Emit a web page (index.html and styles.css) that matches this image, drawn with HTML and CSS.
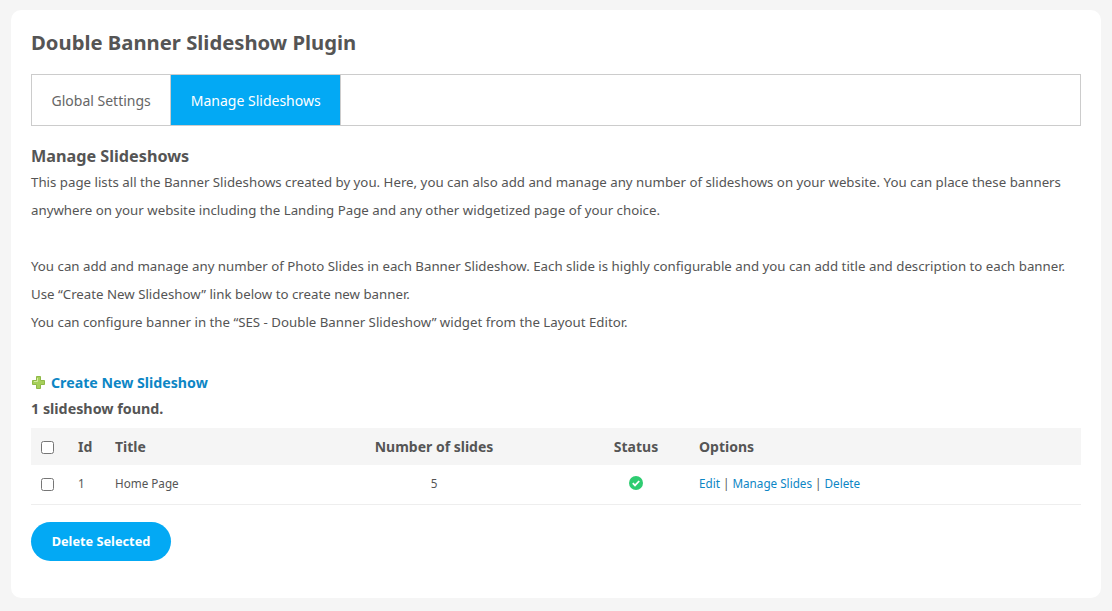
FILE: index.html
```html
<!DOCTYPE html>
<html lang="en">
<head>
<meta charset="utf-8">
<title>Double Banner Slideshow Plugin</title>
<link rel="stylesheet" href="styles.css">
</head>
<body>
<main class="card">
  <h1 class="title">Double Banner Slideshow Plugin</h1>
  <nav class="tabs">
    <a class="tab">Global Settings</a>
    <a class="tab tab-active">Manage Slideshows</a>
  </nav>
  <h2 class="section">Manage Slideshows</h2>
  <p class="desc">This page lists all the Banner Slideshows created by you. Here, you can also add and manage any number of slideshows on your website. You can place these banners<br>anywhere on your website including the Landing Page and any other widgetized page of your choice.<br><br>You can add and manage any number of Photo Slides in each Banner Slideshow. Each slide is highly configurable and you can add title and description to each banner.<br>Use “Create New Slideshow” link below to create new banner.<br>You can configure banner in the “SES - Double Banner Slideshow” widget from the Layout Editor.</p>
  <a class="create">
    <svg class="plus" width="15" height="15" viewBox="0 0 15 15"><path d="M5.500 1.500h4v4h4v4h-4v4h-4v-4h-4v-4h4z" fill="#a6cf5a" stroke="#8fb847" stroke-width="1"/><path d="M6.500 3v3.500H3" fill="none" stroke="#d4ea9f" stroke-width="1"/></svg>
    Create New Slideshow</a>
  <div class="count">1 slideshow found.</div>
  <table class="grid">
    <thead>
      <tr>
        <th class="c-check"><input class="box-head" type="checkbox"></th>
        <th class="c-id">Id</th>
        <th class="c-title">Title</th>
        <th class="c-num">Number of slides</th>
        <th class="c-status">Status</th>
        <th class="c-opt">Options</th>
      </tr>
    </thead>
    <tbody>
      <tr>
        <td class="c-check"><input class="box-row" type="checkbox"></td>
        <td class="c-id">1</td>
        <td class="c-title">Home Page</td>
        <td class="c-num">5</td>
        <td class="c-status"><svg class="ok" width="14" height="14" viewBox="0 0 14 14"><circle cx="7" cy="7" r="7" fill="#2ecc71"/><path d="M3.800 7.200l2.200 2.200 4.200-4.400" fill="none" stroke="#fff" stroke-width="1.800"/></svg></td>
        <td class="c-opt"><a>Edit</a> | <a>Manage Slides</a> | <a>Delete</a></td>
      </tr>
    </tbody>
  </table>
  <button class="delete" type="button">Delete Selected</button>
</main>
</body>
</html>
```
FILE: styles.css
```css
* { box-sizing: border-box; }
html, body { margin: 0; height: 100%; }
body {
  background: #f5f5f5;
  padding: 10px 11px 13px;
  font-family: "Noto Sans", sans-serif;
  color: #555;
  overflow: hidden;
}
.card {
  background: #fff;
  border-radius: 10px;
  height: 588px;
  padding: 20px;
}
.title {
  margin: 0;
  font-size: 20.250px;
  line-height: 24px;
  font-weight: 700;
  color: #555;
}
.tabs {
  display: flex;
  margin-top: 20px;
  height: 52px;
  border: 1px solid #ccc;
}
.tab {
  padding: 2px 19.500px 0;
  line-height: 48px;
  font-size: 14px;
  color: #666;
  border-right: 1px solid #ccc;
}
.tab-active { background: #03a9f4; color: #fff; }
.section {
  margin: 20px 0 0;
  font-size: 16.200px;
  line-height: 20px;
  font-weight: 700;
  color: #555;
}
.desc {
  margin: 2px 0 0;
  font-size: 13.280px;
  line-height: 28px;
  color: #555;
}
.create {
  display: flex;
  align-items: center;
  gap: 5px;
  margin-top: 36px;
  height: 20px;
  font-size: 14.200px;
  font-weight: 700;
  color: #0d86c5;
}
.count {
  margin-top: 8px;
  font-size: 14.300px;
  line-height: 18px;
  font-weight: 700;
}
.grid {
  width: 100%;
  margin-top: 10px;
  border-collapse: collapse;
  table-layout: fixed;
}
.grid th {
  height: 37px;
  padding: 0;
  background: #f5f5f5;
  font-size: 14px;
  font-weight: 700;
  text-align: left;
}
.grid td {
  height: 39px;
  padding: 0 0 2px;
  border-bottom: 1px solid #eee;
  font-size: 11.700px;
  color: #555;
}
.grid .c-check { width: 47px; padding-left: 10px; }
.c-check input { display: block; margin: 0; width: 13px; height: 13px; }
.c-check .box-head { margin-top: 2px; }
.c-check .box-row { margin-top: 2px; }
.c-id { width: 37px; }
.c-title { width: 180px; }
.grid .c-num { width: 278px; text-align: center; }
.grid .c-status { width: 126px; text-align: center; }
.ok { display: block; margin: 0 auto; }
.c-opt, .c-opt a { color: #0d86c5; }
.grid th.c-opt { color: #555; }
.delete {
  display: block;
  width: 140px;
  height: 39px;
  margin-top: 17px;
  border: 0;
  border-radius: 20px;
  background: #03a9f4;
  color: #fff;
  font-family: inherit;
  font-size: 12.750px;
  font-weight: 700;
  padding: 0;
}
```
